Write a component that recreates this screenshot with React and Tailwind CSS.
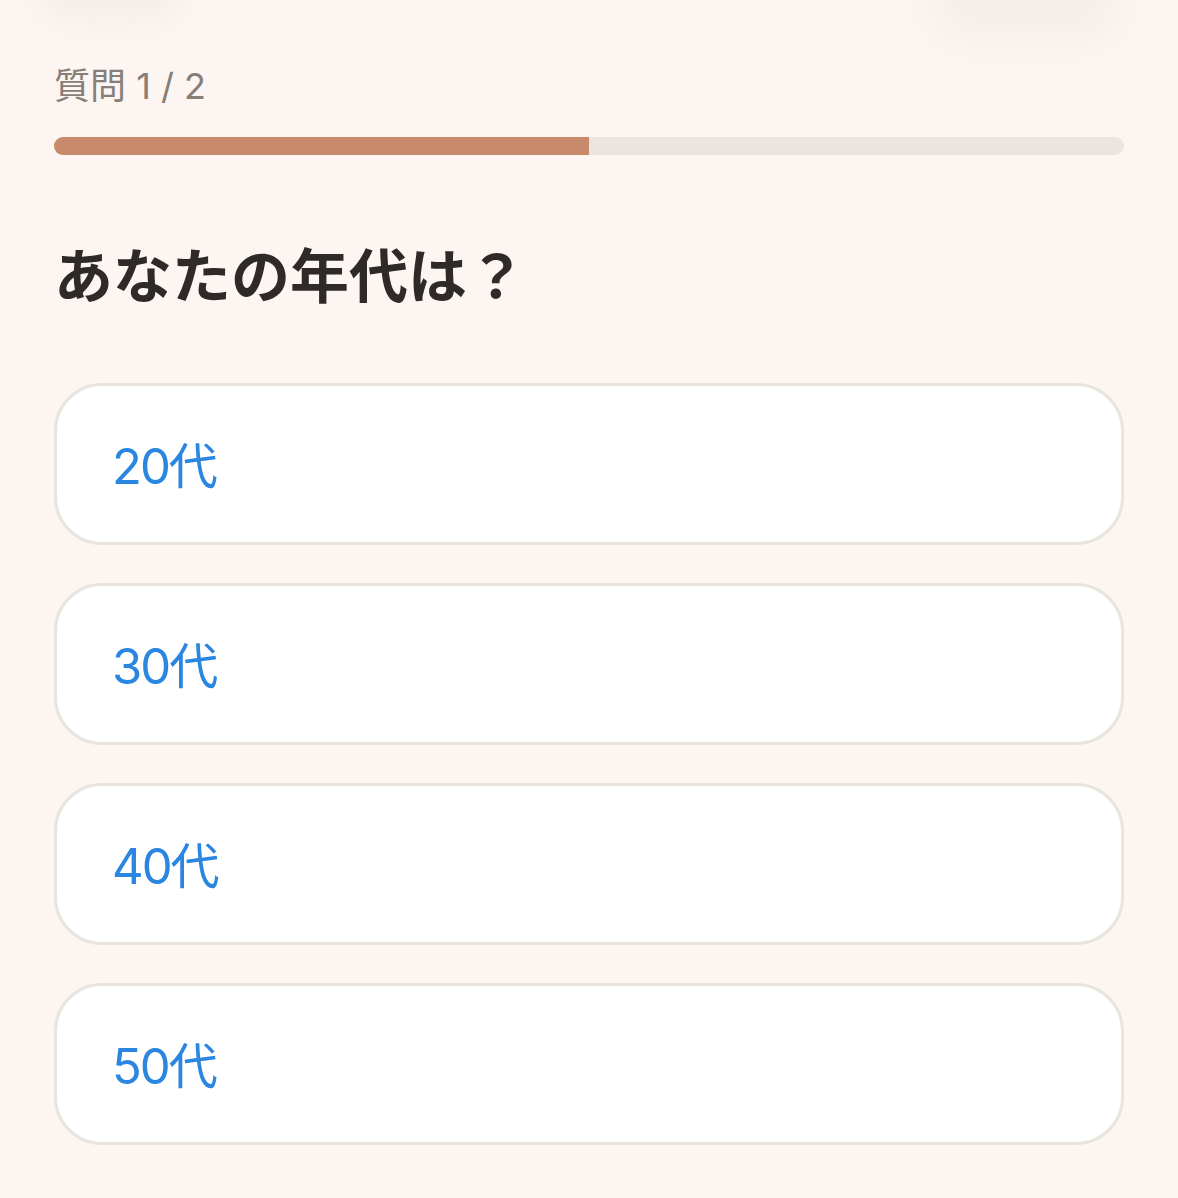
import React from "react";

const options = ["20代", "30代", "40代", "50代"];

export default function App() {
  return (
    <div
      className="relative min-h-[1198px] w-full overflow-hidden bg-[#fcf5f2]"
      style={{ fontFamily: '"Inter", "Noto Sans CJK JP", sans-serif' }}
    >
      <div className="pointer-events-none absolute left-[40px] top-[-40px] h-[60px] w-[140px] rounded-full bg-[#e6e1dc] opacity-40 blur-[16px]" />
      <div className="pointer-events-none absolute left-[930px] top-[-40px] h-[80px] w-[190px] rounded-full bg-[#e6e1dc] opacity-35 blur-[20px]" />

      <div className="px-[54px] pt-[62px]">
        <div className="text-[36px] leading-[48px] text-[#877e78]">質問 1 / 2</div>

        <div className="mt-[27px] h-[18px] w-full overflow-hidden rounded-full bg-[#ebe5df]">
          <div className="h-full w-1/2 bg-[#c78a6a]" />
        </div>

        <h1
          className="mt-[82px] text-[59px] font-bold leading-[72px] text-[#2e2a27]"
          style={{ fontFamily: '"Noto Sans CJK JP", sans-serif' }}
        >
          あなたの年代は？
        </h1>

        <div className="mt-[74px] flex flex-col gap-[38px]">
          {options.map((o) => (
            <button
              key={o}
              className="flex h-[162px] w-full items-center rounded-[48px] border-[3px] border-[#e9e4dc] bg-white pl-[55px] pt-[5px] text-left text-[49px] tracking-[-2px] text-[#2a86e0]"
              style={{ fontFamily: '"Inter", "Noto Sans CJK JP", sans-serif' }}
            >
              {o}
            </button>
          ))}
        </div>
      </div>
    </div>
  );
}
